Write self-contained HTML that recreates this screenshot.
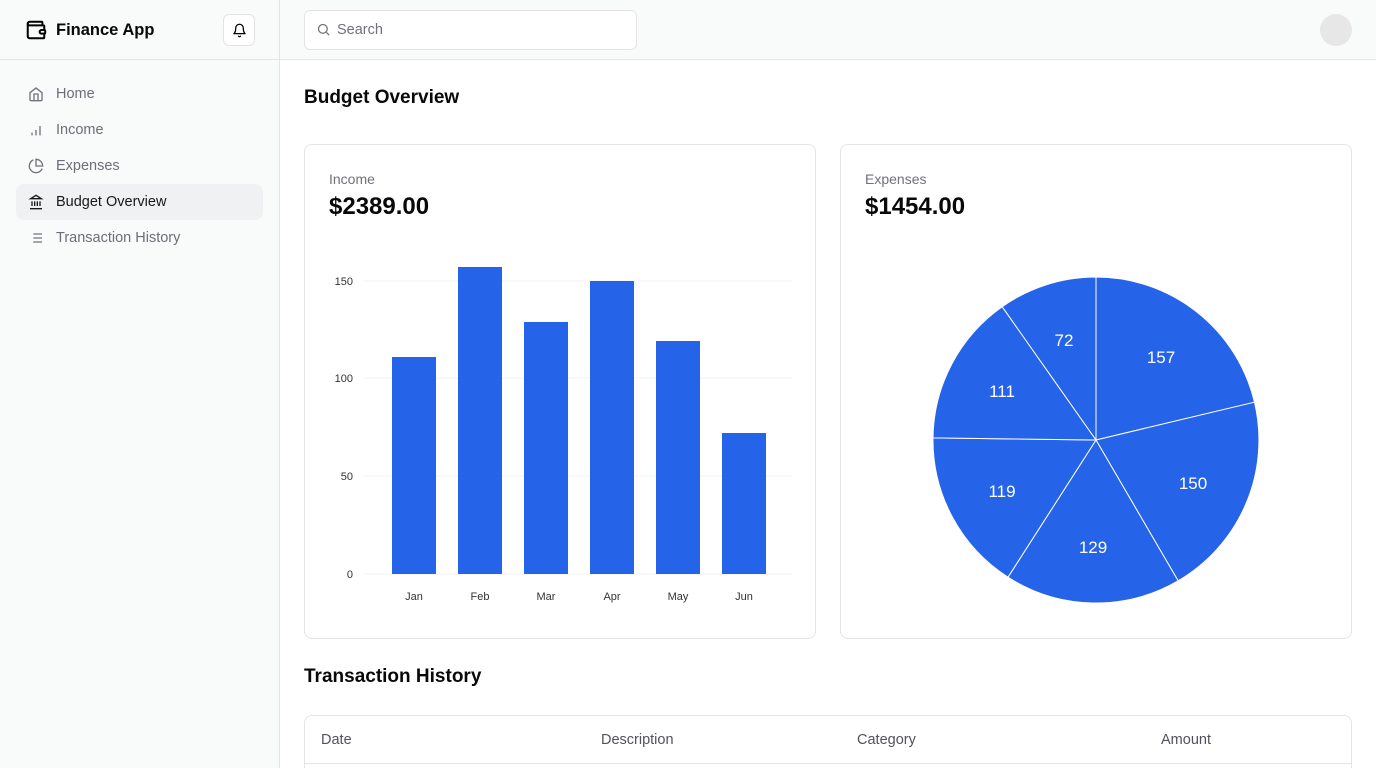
<!DOCTYPE html>
<html style="width:1376px;height:768px;overflow:hidden"><head><meta charset="utf-8"><style>
*{box-sizing:border-box;margin:0;padding:0}
body{width:1376px;height:768px;overflow:hidden;font-family:"Liberation Sans",sans-serif;background:#fff;position:relative;color:#09090b}
.side{position:absolute;left:0;top:0;width:280px;height:768px;background:#f9fafa;border-right:1px solid #e4e4e7}
.top{position:absolute;left:280px;top:0;right:0;height:60px;background:#f9fafa;border-bottom:1px solid #e4e4e7}
.brand{position:absolute;left:0;top:0;width:279px;height:60px;border-bottom:1px solid #e4e4e7}
.nav{position:absolute;left:16px;width:247px;height:36px;border-radius:8px;font-size:14.5px;color:#6b6f78;display:flex;align-items:center;padding-left:40px}
.nav svg{position:absolute;left:12px;top:10px}
.card{position:absolute;border:1px solid #e4e4e7;border-radius:8px;background:#fff}
.lbl{position:absolute;font-size:14px;color:#71717a}
.amt{position:absolute;font-size:24px;font-weight:bold}
h2{position:absolute;font-size:19px;font-weight:bold}
.th{position:absolute;top:732px;font-size:14.5px;color:#52525b}
</style></head><body>
<div class="side">
<div class="brand">
<svg style="position:absolute;left:25px;top:19px" width="22" height="22" viewBox="0 0 24 24" fill="none" stroke="#000" stroke-width="2.2" stroke-linecap="round" stroke-linejoin="round"><path d="M19 7V4a1 1 0 0 0-1-1H5a2 2 0 0 0 0 4h15a1 1 0 0 1 1 1v4h-3a2 2 0 0 0 0 4h3a1 1 0 0 0 1-1v-2a1 1 0 0 0-1-1"/><path d="M3 5v14a2 2 0 0 0 2 2h15a1 1 0 0 0 1-1v-4"/></svg>
<div style="position:absolute;left:56px;top:21px;font-size:16.5px;font-weight:bold">Finance App</div>
<div style="position:absolute;left:223px;top:14px;width:32px;height:32px;border:1px solid #e4e4e7;border-radius:6px;background:#fff">
<svg style="position:absolute;left:8px;top:8px" width="15" height="15" viewBox="0 0 24 24" fill="none" stroke="#000" stroke-width="2" stroke-linecap="round" stroke-linejoin="round"><path d="M6 8a6 6 0 0 1 12 0c0 7 3 9 3 9H3s3-2 3-9"/><path d="M10.3 21a1.94 1.94 0 0 0 3.4 0"/></svg></div>
</div>
<div class="nav" style="top:76px"><svg width="16" height="16" viewBox="0 0 24 24" fill="none" stroke="#71717a" stroke-width="2"><path d="M3 10l9-7 9 7v10a2 2 0 0 1-2 2H5a2 2 0 0 1-2-2z"/><path d="M9 22V12h6v10"/></svg>Home</div>
<div class="nav" style="top:112px"><svg width="16" height="16" viewBox="0 0 24 24" fill="none" stroke="#71717a" stroke-width="2"><path d="M6 20v-4M12 20v-8M18 20V6"/></svg>Income</div>
<div class="nav" style="top:148px"><svg width="16" height="16" viewBox="0 0 24 24" fill="none" stroke="#71717a" stroke-width="2"><path d="M21.2 15.9A10 10 0 1 1 8 2.8"/><path d="M22 12A10 10 0 0 0 12 2v10z"/></svg>Expenses</div>
<div class="nav" style="top:184px;background:#f0f1f3;color:#18181b"><svg width="16" height="16" viewBox="0 0 24 24" fill="none" stroke="#18181b" stroke-width="2"><path d="M3 22h18M6 18v-7M10 18v-7M14 18v-7M18 18v-7M12 2l8 5H4z"/></svg>Budget Overview</div>
<div class="nav" style="top:220px"><svg width="16" height="16" viewBox="0 0 24 24" fill="none" stroke="#71717a" stroke-width="2"><path d="M8 6h13M8 12h13M8 18h13M3 6h.01M3 12h.01M3 18h.01"/></svg>Transaction History</div>
</div>
<div class="top">
<div style="position:absolute;left:24px;top:10px;width:333px;height:40px;border:1px solid #e4e4e7;border-radius:6px;background:#fff">
<svg style="position:absolute;left:11px;top:11px" width="15" height="15" viewBox="0 0 24 24" fill="none" stroke="#71717a" stroke-width="2"><circle cx="11" cy="11" r="7"/><path d="M21 21l-4.3-4.3"/></svg>
<div style="position:absolute;left:32px;top:11px;font-size:14.5px;color:#71717a">Search</div></div>
<div style="position:absolute;left:1040px;top:14px;width:32px;height:32px;border-radius:50%;background:#e7e7e7"></div>
</div>
<h2 style="left:304px;top:87px">Budget Overview</h2>
<div class="card" style="left:304px;top:144px;width:512px;height:495px">
<div class="lbl" style="left:24px;top:26px">Income</div>
<div class="amt" style="left:24px;top:48px">$2389.00</div>
</div>
<svg style="position:absolute;left:304px;top:144px" width="512" height="495">
<g stroke="#f3f3f3"><line x1="60" y1="137" x2="488" y2="137"/><line x1="60" y1="234" x2="488" y2="234"/><line x1="60" y1="332" x2="488" y2="332"/><line x1="60" y1="430" x2="488" y2="430"/></g>
<g font-family="Liberation Sans" font-size="11" fill="#333" text-anchor="end"><text x="49" y="141">150</text><text x="49" y="238">100</text><text x="49" y="336">50</text><text x="49" y="434">0</text></g>
<g fill="#2563e8"><rect x="88" y="213" width="44" height="217"/><rect x="154" y="123" width="44" height="307"/><rect x="220" y="178" width="44" height="252"/><rect x="286" y="137" width="44" height="293"/><rect x="352" y="197" width="44" height="233"/><rect x="418" y="289" width="44" height="141"/></g>
<g font-family="Liberation Sans" font-size="11" fill="#333" text-anchor="middle"><text x="110" y="456">Jan</text><text x="176" y="456">Feb</text><text x="242" y="456">Mar</text><text x="308" y="456">Apr</text><text x="374" y="456">May</text><text x="440" y="456">Jun</text></g>
</svg>
<div class="card" style="left:840px;top:144px;width:512px;height:495px">
<div class="lbl" style="left:24px;top:26px">Expenses</div>
<div class="amt" style="left:24px;top:48px">$1454.00</div>
</div>
<svg style="position:absolute;left:0;top:0" width="1376" height="768">
<g fill="#2563e8" stroke="#fff" stroke-width="1">
<path d="M1096 440L1096 277A163 163 0 0 1 1254.5 402.2Z"/>
<path d="M1096 440L1254.5 402.2A163 163 0 0 1 1178.1 580.8Z"/>
<path d="M1096 440L1178.1 580.8A163 163 0 0 1 1008 577.2Z"/>
<path d="M1096 440L1008 577.2A163 163 0 0 1 933 437.9Z"/>
<path d="M1096 440L933 437.9A163 163 0 0 1 1002.2 306.7Z"/>
<path d="M1096 440L1002.2 306.7A163 163 0 0 1 1096 277Z"/>
</g>
<g font-family="Liberation Sans" font-size="17" fill="#fff" text-anchor="middle"><text x="1161" y="363">157</text><text x="1193" y="489">150</text><text x="1093" y="553">129</text><text x="1002" y="497">119</text><text x="1002" y="397">111</text><text x="1064" y="346">72</text></g>
</svg>
<h2 style="left:304px;top:666px">Transaction History</h2>
<div class="card" style="left:304px;top:715px;width:1048px;height:80px;border-radius:8px"><div style="position:absolute;left:0;right:0;top:47px;border-top:1px solid #e4e4e7"></div></div>
<div class="th" style="left:321px">Date</div><div class="th" style="left:601px">Description</div><div class="th" style="left:857px">Category</div><div class="th" style="left:1161px">Amount</div>
</body></html>
